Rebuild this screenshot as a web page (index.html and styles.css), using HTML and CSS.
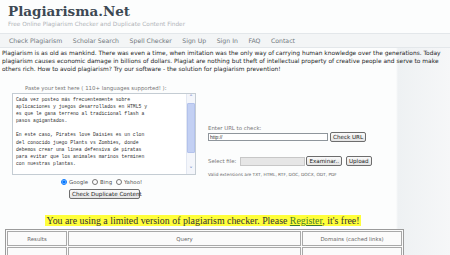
FILE: index.html
```html
<!DOCTYPE html>
<html lang="en">
<head>
    <meta charset="UTF-8">
    <title>Plagiarisma.Net</title>
    <link rel="stylesheet" href="styles.css">
</head>
<body>

    <!-- Header -->
    <header class="site-header">
        <h1>Plagiarisma.Net</h1>
        <p class="tagline">Free Online Plagiarism Checker and Duplicate Content Finder</p>
    </header>

    <!-- Menu -->
    <nav class="menu">
        <a href="#">Check Plagiarism</a>
        <a href="#">Scholar Search</a>
        <a href="#">Spell Checker</a>
        <a href="#">Sign Up</a>
        <a href="#">Sign In</a>
        <a href="#">FAQ</a>
        <a href="#">Contact</a>
    </nav>

    <div class="page">
        <p class="intro">Plagiarism is as old as mankind. There was even a time, when imitation was the only way of carrying human knowledge over the generations. Today plagiarism causes economic damage in billions of dollars. Plagiat are nothing but theft of intellectual property of creative people and serve to make others rich. How to avoid plagiarism? Try our software - the solution for plagiarism prevention!</p>

        <!-- Checker form -->
        <form class="checker">
            <div class="text-col">
                <label class="paste-label" for="text">Paste your text here ( 110+ languages supported! ):</label>
                <div class="paste-wrap">
                    <textarea id="text" class="paste-box">Cada vez posteo más frecuentemente sobre
aplicaciones y juegos desarrollados en HTML5 y
es que le gana terreno al tradicional flash a
pasos agigantados.

En este caso, Pirates love Daisies es un clon
del conocido juego Plants vs Zombies, donde
debemos crear una línea defensiva de piratas
para evitar que los animales marinos terminen
con nuestras plantas.</textarea>
                    <div class="scroll">
                        <span class="arrow">&#x02C4;</span>
                        <span class="thumb"></span>
                        <span class="arrow">&#x02C5;</span>
                    </div>
                </div>
                <div class="engines">
                    <label><input type="radio" name="engine" checked> Google</label>
                    <label><input type="radio" name="engine"> Bing</label>
                    <label><input type="radio" name="engine"> Yahoo!</label>
                </div>
                <button type="button" class="btn dup-btn">Check Duplicate Content</button>
            </div>

            <div class="side-col">
                <div class="url-block">
                    <span class="field-label">Enter URL to check:</span>
                    <div class="row">
                        <input type="text" class="url-input" value="http://">
                        <button type="button" class="btn">Check URL</button>
                    </div>
                </div>
                <div class="file-block">
                    <span class="field-label">Select file:</span>
                    <span class="file-box"></span>
                    <button type="button" class="btn">Examinar..</button>
                    <button type="button" class="btn">Upload</button>
                </div>
                <p class="note">Valid extensions are TXT, HTML, RTF, DOC, DOCX, ODT, PDF</p>
            </div>
        </form>

        <p class="notice"><span>You are using a limited version of plagiarism checker. Please <a href="#">Register</a>, it's free!</span></p>

        <table class="results">
            <tr>
                <th class="c-res">Results</th>
                <th class="c-query">Query</th>
                <th class="c-dom">Domains (cached links)</th>
            </tr>
            <tr>
                <td></td>
                <td></td>
                <td></td>
            </tr>
        </table>
    </div>

</body>
</html>
```

FILE: styles.css
```css
/* Basic Reset */
* { margin: 0; padding: 0; box-sizing: border-box; }

body {
    font-family: "DejaVu Sans", Verdana, sans-serif;
    color: #222;
    background: linear-gradient(to right, #fcfdfd 0, #fcfdfd 396px, #eef1f3 398px, #f6f7f8 450px);
    overflow: hidden;
}

/* Header */
.site-header {
    padding: 3px 8px 0;
    height: 33px;
    background: #fcfdfd;
}
.site-header h1 {
    font-family: "DejaVu Serif", Georgia, serif;
    font-size: 13.5px;
    line-height: 17px;
    color: #3c4853;
}
.tagline {
    font-size: 5.8px;
    line-height: 8px;
    color: #b0b4b8;
}

/* Menu */
.menu {
    height: 15px;
    display: flex;
    align-items: center;
    gap: 10.5px;
    padding-left: 9px;
    background: #f3f5f6;
    border-top: 1px solid #e3e7ea;
    border-bottom: 1px solid #e3e7ea;
}
.menu a {
    font-size: 6.2px;
    color: #71777d;
    text-decoration: none;
}

/* Intro text */
.intro {
    font-size: 5.9px;
    line-height: 8px;
    padding: 1px 2px 0;
    color: #1d1d1d;
}

/* Checker form */
.checker {
    display: flex;
    margin-top: 12px;
}
.text-col {
    width: 208px;
    padding-left: 12px;
    display: flex;
    flex-direction: column;
}
.paste-label {
    font-size: 5.4px;
    line-height: 7px;
    color: #777;
    padding-left: 13px;
}
.paste-wrap {
    display: flex;
    width: 184px;
    height: 82px;
    margin-top: 1px;
    border: 1px solid #c4ccd3;
    background: #fff;
}
.paste-box {
    flex: 1;
    padding: 2px 3px;
    font-family: "Liberation Mono", "Courier New", monospace;
    font-size: 4.75px;
    line-height: 7.1px;
    color: #333;
    border: none;
    white-space: pre;
    resize: none;
    overflow: hidden;
}
.scroll {
    width: 9px;
    display: flex;
    flex-direction: column;
    align-items: center;
    background: #f4f6fb;
    border-left: 1px solid #e3e8f2;
}
.scroll .arrow {
    height: 8px;
    font-size: 7px;
    line-height: 9px;
    color: #5a72b8;
}
.scroll .thumb {
    flex: 1;
    width: 8px;
    margin: 1px 0 13px;
    background: #c3d0f3;
    border: 1px solid #b3c2ec;
    border-radius: 1px;
}
.engines {
    display: flex;
    gap: 4px;
    margin: 4px 0 0 49px;
    font-size: 5.4px;
    color: #555;
}
.engines label {
    display: flex;
    align-items: center;
    gap: 2px;
}
.engines input {
    width: 6px;
    height: 6px;
    margin: 0;
}
.btn {
    font-family: "DejaVu Sans", Verdana, sans-serif;
    font-size: 5.6px;
    color: #222;
    padding: 0 2px;
    height: 10px;
    white-space: nowrap;
    background: linear-gradient(#fafafa, #e4e4e4);
    border: 1px solid #6d6d6d;
    border-radius: 2px;
}
.dup-btn {
    align-self: flex-start;
    margin: 4px 0 0 57px;
    width: 71px;
}

/* Side column */
.side-col {
    padding-top: 40px;
    font-size: 5.4px;
    color: #777;
}
.field-label {
    line-height: 7px;
}
.url-block .row {
    display: flex;
    align-items: center;
    gap: 2px;
}
.url-input {
    width: 120px;
    height: 8px;
    font-size: 5px;
    padding: 0 1px;
    border: 1px solid #8f969c;
    color: #333;
}
.file-block {
    display: flex;
    align-items: center;
    gap: 3px;
    margin-top: 14px;
}
.file-box {
    width: 65px;
    height: 9px;
    background: #e6e6e6;
    border: 1px solid #c7c7c7;
    margin-left: 1px;
}
.file-block .btn {
    margin-left: -2px;
}
.file-block .btn + .btn {
    margin-left: 1px;
}
.note {
    margin-top: 6px;
    font-size: 4.3px;
    color: #666;
}

/* Notice */
.notice {
    text-align: center;
    margin-top: 16px;
    padding-right: 44px;
    font-family: "Liberation Serif", "Times New Roman", serif;
    font-size: 9.9px;
    line-height: 12px;
    color: #333;
}
.notice span {
    background: #ffff3a;
    padding: 0 1px;
}
.notice a {
    color: #3f7a2c;
}

/* Results table */
.results {
    margin: 2px 0 0 5px;
    width: 399px;
    border: 1px solid #9b9b9b;
    border-collapse: separate;
    border-spacing: 1px;
    background: #fbfbfb;
}
.results th, .results td {
    border: 1px solid #a9a9a9;
    font-size: 5.4px;
    font-weight: normal;
    color: #666;
    height: 15px;
}
.c-res { width: 60px; }
.c-dom { width: 100px; }
```
